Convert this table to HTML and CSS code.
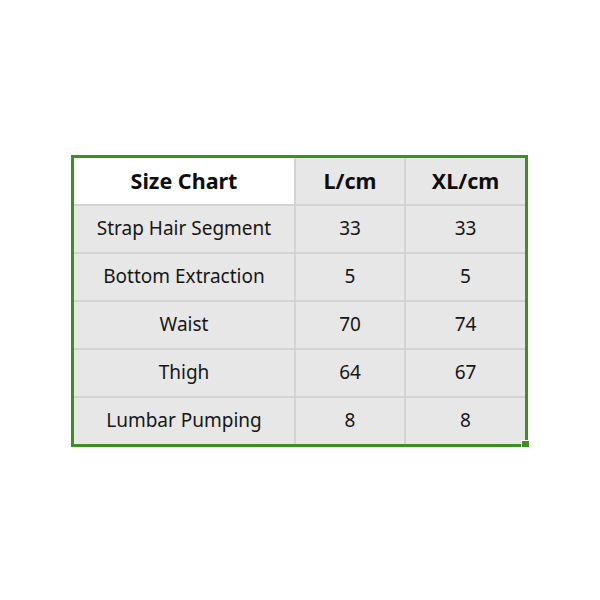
FILE: index.html
```html
<!DOCTYPE html>
<html>
<head>
<meta charset="utf-8">
<link rel="stylesheet" href="styles.css">
</head>
<body>
<div class="page">
  <div class="sheet">
    <div class="grid">
      <div class="cell head first">Size Chart</div>
      <div class="cell head">L/cm</div>
      <div class="cell head">XL/cm</div>

      <div class="cell">Strap Hair Segment</div>
      <div class="cell">33</div>
      <div class="cell">33</div>

      <div class="cell">Bottom Extraction</div>
      <div class="cell">5</div>
      <div class="cell">5</div>

      <div class="cell">Waist</div>
      <div class="cell">70</div>
      <div class="cell">74</div>

      <div class="cell">Thigh</div>
      <div class="cell">64</div>
      <div class="cell">67</div>

      <div class="cell">Lumbar Pumping</div>
      <div class="cell">8</div>
      <div class="cell">8</div>
    </div>
    <div class="handle"></div>
  </div>
</div>
</body>
</html>
```
FILE: styles.css
```css
html, body {
  margin: 0;
  padding: 0;
  background: #ffffff;
}
.page {
  padding: 155px 0 0 71px;
}
.sheet {
  position: relative;
  width: fit-content;
  border: 3px solid #3b901f;
}
.grid {
  display: grid;
  grid-template-columns: 220px 108px 119px;
  grid-auto-rows: 46px;
  gap: 2px;
  background: #d3d3d3;
}
.cell {
  display: flex;
  align-items: center;
  justify-content: center;
  padding-bottom: 2px;
  background: #e7e7e7;
  font-family: "Noto Sans", "Open Sans", sans-serif;
  font-size: 19px;
  color: #161616;
}
.head {
  font-weight: 700;
  font-size: 21.5px;
  color: #0e0e0e;
}
.first {
  background: #ffffff;
}
.handle {
  position: absolute;
  right: -5px;
  bottom: -5px;
  width: 7px;
  height: 7px;
  background: #3b901f;
  border: 1px solid #ffffff;
}
```
